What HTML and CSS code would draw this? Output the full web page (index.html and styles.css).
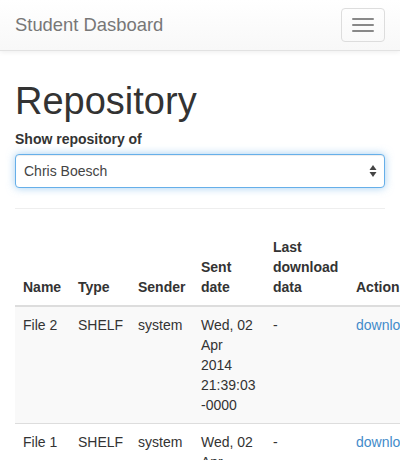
FILE: index.html
```html
<!DOCTYPE html>
<html>
<head>
<meta charset="utf-8">
<title>Student Dasboard</title>
<link rel="stylesheet" href="styles.css">
</head>
<body>
<nav class="navbar">
  <a class="brand" href="#">Student Dasboard</a>
  <button class="toggle" type="button" aria-label="Toggle navigation">
    <span class="bar"></span>
    <span class="bar"></span>
    <span class="bar"></span>
  </button>
</nav>
<main class="container">
  <h1 class="title">Repository</h1>
  <label class="label" for="owner">Show repository of</label>
  <div class="select-wrap">
    <select class="select" id="owner">
      <option>Chris Boesch</option>
    </select>
    <svg class="select-arrows" width="8" height="14" viewBox="0 0 8 14" aria-hidden="true">
      <path d="M4 1 L7.5 6 L0.5 6 Z" fill="#444"/>
      <path d="M4 13 L7.5 8 L0.5 8 Z" fill="#444"/>
    </svg>
  </div>
  <hr class="rule">
  <div class="table-wrap">
    <table class="table">
      <colgroup>
        <col class="c-name"><col class="c-type"><col class="c-sender"><col class="c-date"><col class="c-last"><col class="c-action">
      </colgroup>
      <thead>
        <tr>
          <th>Name</th>
          <th>Type</th>
          <th>Sender</th>
          <th>Sent date</th>
          <th>Last download data</th>
          <th>Action</th>
        </tr>
      </thead>
      <tbody>
        <tr class="odd">
          <td>File 2</td>
          <td>SHELF</td>
          <td>system</td>
          <td>Wed, 02 Apr 2014 21:39:03 -0000</td>
          <td>-</td>
          <td><a href="#">download</a></td>
        </tr>
        <tr>
          <td>File 1</td>
          <td>SHELF</td>
          <td>system</td>
          <td>Wed, 02 Apr 2014 21:39:03 -0000</td>
          <td>-</td>
          <td><a href="#">download</a></td>
        </tr>
      </tbody>
    </table>
  </div>
</main>
</body>
</html>
```
FILE: styles.css
```css
html, body {
  margin: 0;
  padding: 0;
}
body {
  font-family: "Liberation Sans", Arial, sans-serif;
  font-size: 14px;
  line-height: 20px;
  color: #333;
  background: #fff;
  overflow-x: hidden;
}
.navbar {
  display: flex;
  justify-content: space-between;
  align-items: flex-start;
  min-height: 50px;
  background: linear-gradient(to bottom, #ffffff 0, #f8f8f8 100%);
  border-bottom: 1px solid #e2e2e2;
  box-shadow: inset 0 1px 0 rgba(255,255,255,.15), 0 1px 5px rgba(0,0,0,.075);
}
.brand {
  padding: 15px;
  font-size: 18.4px;
  line-height: 20px;
  color: #777;
  text-decoration: none;
}
.toggle {
  margin: 8px 15px 0 0;
  padding: 9px 10px;
  width: 44px;
  height: 34px;
  box-sizing: border-box;
  background: transparent;
  border: 1px solid #ddd;
  border-radius: 4px;
  display: flex;
  flex-direction: column;
  gap: 4px;
}
.bar {
  display: block;
  width: 22px;
  height: 2px;
  border-radius: 1px;
  background: #888;
}
.container {
  padding: 0 15px;
}
.title {
  margin: 30px 0 6px;
  font-size: 38px;
  line-height: 1.1;
  font-weight: normal;
  color: #333;
}
.label {
  display: block;
  margin-bottom: 5px;
  font-weight: bold;
}
.select-wrap {
  position: relative;
}
.select {
  display: block;
  width: 100%;
  height: 34px;
  padding: 0 8px;
  font-family: inherit;
  font-size: 14px;
  color: #444;
  background: #fff;
  border: 1px solid #66afe9;
  border-radius: 4px;
  box-shadow: inset 0 1px 1px rgba(0,0,0,.075), 0 0 8px rgba(102,175,233,.6);
  appearance: none;
  -webkit-appearance: none;
  outline: none;
}
.select-arrows {
  position: absolute;
  right: 8px;
  top: 10px;
}
.rule {
  margin: 20px 0;
  border: 0;
  border-top: 1px solid #eee;
}
.table-wrap {
  width: 411px;
}
.table {
  width: 411px;
  table-layout: fixed;
  border-collapse: collapse;
  border-spacing: 0;
  margin-bottom: 20px;
}
.c-name { width: 55px; }
.c-type { width: 60px; }
.c-sender { width: 63px; }
.c-date { width: 72px; }
.c-last { width: 83px; }
.c-action { width: 78px; }
.table th,
.table td {
  padding: 8px;
  text-align: left;
  vertical-align: top;
  line-height: 20px;
}
.table th {
  vertical-align: bottom;
  font-weight: bold;
  border-bottom: 2px solid #ddd;
}
.table td {
  border-top: 1px solid #ddd;
}
.table tr.odd td {
  background: #f9f9f9;
}
.table a {
  color: #428bca;
  text-decoration: none;
}
```
